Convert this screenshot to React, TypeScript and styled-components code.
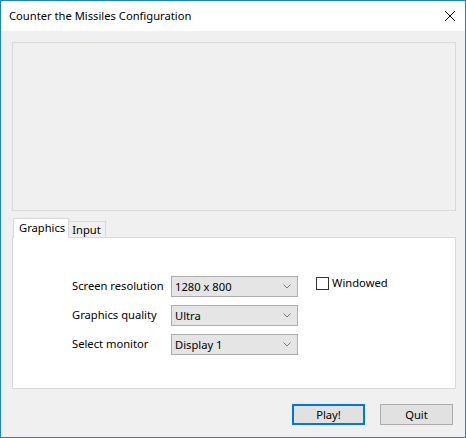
import styled, { createGlobalStyle } from "styled-components"

const GlobalStyle = createGlobalStyle`
    html, body {
        margin: 0;
        padding: 0;
        background: #f0f0f0;
    }
    body {
        font-family: "Noto Sans", "Liberation Sans", sans-serif;
        font-size: 11.2px;
        color: #000;
    }
`

const Window = styled.div`
    box-sizing: border-box;
    width: 466px;
    height: 438px;
    border: 1px solid #1883d7;
    display: flex;
    flex-direction: column;
    background: #f0f0f0;
`
const TitleBar = styled.div`
    height: 30px;
    background: #fff;
    display: flex;
    align-items: center;
    justify-content: space-between;
    padding: 0 10px 0 8px;
`
const Title = styled.div`
    padding-bottom: 1px;
`
const CloseIcon = styled.svg`
    width: 10px;
    height: 10px;
`
const Body = styled.div`
    flex: 1;
    display: flex;
    flex-direction: column;
    padding: 11px 9px 0 11px;
`
const Preview = styled.div`
    height: 169px;
    box-sizing: border-box;
    border: 1px solid #dadada;
    background: #f0f0f0;
`
const TabStrip = styled.div`
    display: flex;
    align-items: flex-end;
    margin-top: 7px;
    padding-left: 1px;
    position: relative;
    z-index: 1;
    margin-bottom: -1px;
`
const Tab = styled.div<{ $active?: boolean }>`
    box-sizing: border-box;
    height: ${p => (p.$active ? 20 : 17)}px;
    padding: ${p => (p.$active ? "1px 3px 0 5px" : "0 4px 0 3px")};
    border: 1px solid #d9d9d9;
    border-bottom: ${p => (p.$active ? "none" : "1px solid #d9d9d9")};
    border-left: ${p => (p.$active ? "1px solid #d9d9d9" : "none")};
    background: ${p => (p.$active ? "#fff" : "#f0f0f0")};
    display: flex;
    align-items: ${p => (p.$active ? "flex-start" : "center")};
    line-height: 16px;
`
const Panel = styled.div`
    height: 152px;
    box-sizing: border-box;
    border: 1px solid #d9d9d9;
    background: #fff;
    padding: 38px 0 0 59px;
`
const Form = styled.div`
    display: grid;
    grid-template-columns: 99px 127px auto;
    row-gap: 8px;
    align-items: start;
`
const Label = styled.div`
    height: 21px;
    line-height: 19px;
`
const Select = styled.div`
    box-sizing: border-box;
    height: 21px;
    border: 1px solid #adadad;
    background: #e5e5e5;
    display: flex;
    align-items: center;
    justify-content: space-between;
    padding: 0 6px 0 3px;
`
const Chevron = styled.svg`
    width: 8px;
    height: 5px;
`
const CheckRow = styled.label`
    display: flex;
    align-items: flex-start;
    margin-left: 18px;
    margin-top: 1px;
    line-height: 13px;
`
const Box = styled.span`
    box-sizing: border-box;
    width: 13px;
    height: 13px;
    border: 1px solid #333;
    background: #fff;
    margin-right: 3px;
`
const BoxText = styled.span`
    margin-top: -1px;
`
const Footer = styled.div`
    display: flex;
    justify-content: flex-end;
    gap: 15px;
    margin-top: 15px;
    padding-right: 3px;
`
const Button = styled.div<{ $default?: boolean }>`
    box-sizing: border-box;
    width: 73px;
    height: 21px;
    background: #e1e1e1;
    border: ${p => (p.$default ? "2px solid #0078d7" : "1px solid #adadad")};
    display: flex;
    align-items: center;
    justify-content: center;
`

const Dropdown = ({ value }: { value: string }) => (
    <Select>
        <span>{value}</span>
        <Chevron viewBox="0 0 8 5">
            <path d="M0.5 0.5 L4 4 L7.5 0.5" fill="none" stroke="#7a7a7a" strokeWidth="1" />
        </Chevron>
    </Select>
)

const App = () => {
    return <>
        <GlobalStyle />
        <Window>
            <TitleBar>
                <Title>Counter the Missiles Configuration</Title>
                <CloseIcon viewBox="0 0 10 10">
                    <path d="M0 0 L10 10 M10 0 L0 10" stroke="#000" strokeWidth="1" />
                </CloseIcon>
            </TitleBar>
            <Body>
                <Preview />
                <TabStrip>
                    <Tab $active>Graphics</Tab>
                    <Tab>Input</Tab>
                </TabStrip>
                <Panel>
                    <Form>
                        <Label>Screen resolution</Label>
                        <Dropdown value="1280 x 800" />
                        <CheckRow><Box /><BoxText>Windowed</BoxText></CheckRow>
                        <Label>Graphics quality</Label>
                        <Dropdown value="Ultra" />
                        <div />
                        <Label>Select monitor</Label>
                        <Dropdown value="Display 1" />
                        <div />
                    </Form>
                </Panel>
                <Footer>
                    <Button $default>Play!</Button>
                    <Button>Quit</Button>
                </Footer>
            </Body>
        </Window>
    </>
}

export default App
